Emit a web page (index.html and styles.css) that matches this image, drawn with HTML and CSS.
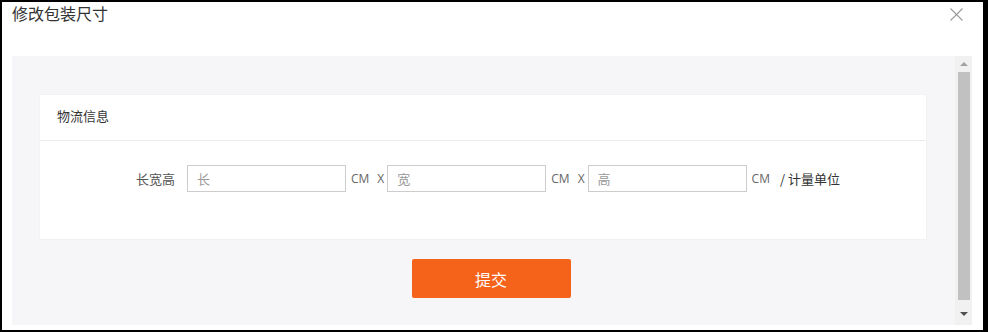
FILE: index.html
```html
<!DOCTYPE html>
<html lang="zh-CN">
<head>
	<meta charset="UTF-8">
	<title>修改包装尺寸</title>
	<link rel="stylesheet" href="styles.css">
</head>
<body>
	<div class="dialog">
		<div class="dialog-head">
			<span class="dialog-title">修改包装尺寸</span>
			<svg class="dialog-close" width="13" height="13" viewBox="0 0 13 13">
				<path d="M0.5 0.5 L12.5 12.5 M12.5 0.5 L0.5 12.5" stroke="#9a9a9a" stroke-width="1.1" fill="none"/>
			</svg>
		</div>
		<div class="dialog-body">
			<div class="scroll-content">
				<div class="card">
					<div class="card-head">物流信息</div>
					<div class="card-body">
						<span class="field-label">长宽高</span>
						<input class="field-input" type="text" placeholder="长">
						<span class="unit">CM</span><span class="times">X</span>
						<input class="field-input" type="text" placeholder="宽">
						<span class="unit">CM</span><span class="times">X</span>
						<input class="field-input" type="text" placeholder="高">
						<span class="unit">CM</span><span class="unit-note">/ 计量单位</span>
					</div>
				</div>
				<div class="actions">
					<button class="btn-submit" type="button">提交</button>
				</div>
			</div>
			<div class="scrollbar">
				<span class="arrow-up"></span>
				<div class="thumb"></div>
				<span class="arrow-down"></span>
			</div>
		</div>
	</div>
</body>
</html>
```

FILE: styles.css
```css
*{
	margin: 0;
	padding: 0;
	box-sizing: border-box;
}
body{
	background: #000;
	padding: 2px 5px 2px 2px;
	font-family: "Noto Sans CJK SC", "Microsoft YaHei", sans-serif;
	font-size: 13px;
	color: #333;
}
.dialog{
	background: #fff;
	height: 328px;
	display: flex;
	flex-direction: column;
}
.dialog-head{
	height: 54px;
	padding: 0 10px;
	display: flex;
	justify-content: space-between;
	align-items: flex-start;
}
.dialog-title{
	font-size: 16px;
	line-height: 22px;
	color: #333;
}
.dialog-close{
	margin-top: 6px;
	margin-right: 10px;
}
.dialog-body{
	flex: 1;
	margin: 0 11px 5px 10px;
	background: #f6f6f8;
	display: flex;
}
.scroll-content{
	flex: 1;
	padding: 38px 28px 0 27px;
}
.card{
	background: #fff;
	height: 146px;
	border: 1px solid #f2f2f4;
}
.card-head{
	height: 46px;
	line-height: 42px;
	padding-left: 17px;
	border-bottom: 1px solid #ebebed;
	color: #333;
}
.card-body{
	display: flex;
	align-items: center;
	padding-top: 24px;
}
.field-label{
	width: 135px;
	text-align: right;
	margin-right: 12px;
	color: #555;
}
.field-input{
	width: 159px;
	height: 27px;
	border: 1px solid #ccc;
	padding: 0 9px;
	font-family: inherit;
	font-size: 13px;
	color: #333;
	outline: none;
}
.field-input::placeholder{
	color: #999;
}
.unit{
	margin-left: 5px;
	color: #666;
	font-family: "Open Sans", "Noto Sans CJK SC", sans-serif;
	font-size: 12px;
}
.times{
	margin-left: 8px;
	margin-right: 3px;
	color: #666;
	font-family: "Open Sans", sans-serif;
	font-size: 12px;
}
.unit-note{
	margin-left: 10px;
	color: #333;
}
.actions{
	padding-top: 19px;
	padding-left: 16px;
	display: flex;
	justify-content: center;
}
.btn-submit{
	width: 159px;
	height: 39px;
	border: none;
	border-radius: 2px;
	background: #f5621a;
	color: #fff;
	font-family: inherit;
	font-size: 16px;
}
.scrollbar{
	width: 17px;
	background: #f1f1f1;
	display: flex;
	flex-direction: column;
	align-items: center;
	padding: 6px 0 5px;
}
.arrow-up,
.arrow-down{
	width: 0;
	height: 0;
	border-left: 4px solid transparent;
	border-right: 4px solid transparent;
}
.arrow-up{
	border-bottom: 4px solid #a3a3a3;
	margin-bottom: 6px;
}
.arrow-down{
	border-top: 4px solid #505050;
	margin-top: 12px;
}
.thumb{
	width: 12px;
	height: 228px;
	background: #c1c1c1;
}
```
